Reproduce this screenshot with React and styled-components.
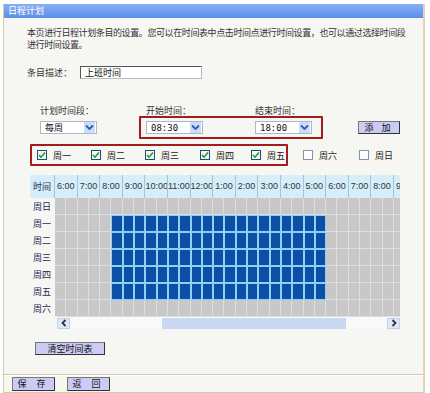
import React from "react";
import styled, { createGlobalStyle } from "styled-components";

const GlobalStyle = createGlobalStyle`
  html, body { margin: 0; padding: 0; background: #fff; }
  body {
    width: 430px;
    height: 393px;
    overflow: hidden;
    font-family: "Noto Sans CJK SC", "Liberation Sans", sans-serif;
    color: #333;
  }
`;

const Frame = styled.div`
  margin: 4px 0 0 3px;
  width: 422px;
  height: 389px;
  box-sizing: border-box;
  border-left: 1px solid #d9c9a3;
  border-right: 2px solid #e2d6b8;
  border-bottom: 1px solid #d9c9a3;
  background: #f6f6f3;
  display: flex;
  flex-direction: column;
`;

const TitleBar = styled.div`
  height: 14px;
  background: linear-gradient(#86b0f6, #5c8eea);
  color: #fff;
  font-size: 9px;
  line-height: 14px;
  padding-left: 4px;
`;

const Body = styled.div`
  flex: 1;
  padding-left: 23px;
  display: flex;
  flex-direction: column;
`;

const Intro = styled.p`
  margin: 9px 0 0;
  font-size: 9px;
  line-height: 12px;
  letter-spacing: -0.4px;
  white-space: nowrap;
  color: #333;
`;

const FieldRow = styled.div`
  margin-top: 15px;
  display: flex;
  align-items: center;
  font-size: 9px;
  height: 13px;
`;

const FieldLabel = styled.span`
  width: 53px;
`;

const TextBox = styled.div`
  width: 122px;
  height: 13px;
  box-sizing: border-box;
  border: 1px solid #555;
  border-right-color: #bbb;
  border-bottom-color: #bbb;
  background: #fff;
  font-size: 9px;
  line-height: 11px;
  padding-left: 4px;
  color: #111;
`;

const LabelRow = styled.div`
  margin: 27px 0 0 13px;
  display: flex;
  font-size: 9px;
  line-height: 10px;
  height: 10px;
`;

const ColLabel = styled.span`
  width: ${(p) => p.$w}px;
`;

const SelectRow = styled.div`
  margin: 0 0 0 13px;
  display: flex;
  align-items: center;
  height: 23px;
`;

const RedBox = styled.div`
  box-sizing: border-box;
  border: 2px solid #a31c1c;
  border-radius: 1px;
  display: flex;
  align-items: center;
  height: ${(p) => p.$h}px;
  width: ${(p) => p.$w}px;
  margin-left: ${(p) => p.$ml || 0}px;
  padding-left: 5px;
`;

const SelectBox = styled.div`
  width: 57px;
  height: 13px;
  box-sizing: border-box;
  border: 1px solid #a8b8d0;
  background: #fff;
  display: flex;
  align-items: center;
  justify-content: space-between;
  font-size: 9px;
  color: #111;
  padding-left: 4px;
  margin-right: ${(p) => p.$mr || 0}px;
  font-family: ${(p) => (p.$mono ? '"DejaVu Sans Mono", monospace' : "inherit")};
`;

const DropBtn = styled.span`
  width: 11px;
  height: 11px;
  margin-right: 1px;
  background: #cfdcf6;
  display: flex;
  align-items: center;
  justify-content: center;
`;

const Button = styled.button`
  box-sizing: border-box;
  width: ${(p) => p.$w}px;
  height: ${(p) => p.$h || 13}px;
  margin-left: ${(p) => p.$ml || 0}px;
  margin-top: ${(p) => p.$mt || 0}px;
  padding: 0;
  border: 1px solid #333;
  border-top-color: #777;
  border-left-color: #777;
  background: #cbcbf3;
  font-family: inherit;
  font-size: 9px;
  line-height: 11px;
  color: #111;
  letter-spacing: ${(p) => p.$ls || 0}px;
`;

const CheckRow = styled.div`
  margin: 5px 0 0 3px;
  display: flex;
  align-items: center;
  height: 22px;
`;

const CheckItem = styled.label`
  display: flex;
  align-items: center;
  width: ${(p) => (p.$w ? `${p.$w}px` : "auto")};
  margin-left: ${(p) => p.$ml || 0}px;
  font-size: 9px;
  color: #222;
`;

const Box = styled.span`
  width: 10px;
  height: 10px;
  box-sizing: border-box;
  border: 1px solid ${(p) => (p.$on ? "#1d4f7a" : "#8094ac")};
  background: ${(p) => (p.$on ? "#eef6ee" : "#fff")};
  margin-right: 6px;
  display: flex;
  align-items: center;
  justify-content: center;
`;

const Schedule = styled.div`
  margin: 9px 0 0 3px;
  width: 370px;
  display: flex;
`;

const LabelCol = styled.div`
  width: 25px;
  flex: none;
  display: flex;
  flex-direction: column;
`;

const CornerCell = styled.div`
  height: 23px;
  background: #d5eefa;
  font-size: 9px;
  line-height: 23px;
  padding-left: 3px;
  color: #1b2a55;
  border-right: 1px solid #a9c2d2;
  box-sizing: border-box;
`;

const DayCell = styled.div`
  height: 17px;
  font-size: 9px;
  line-height: 17px;
  padding-left: 3px;
  color: #1b2a55;
`;

const HoursPane = styled.div`
  width: 345px;
  overflow: hidden;
  display: flex;
  flex-direction: column;
`;

const HoursGrid = styled.div`
  display: grid;
  grid-template-columns: repeat(${(p) => p.$cols}, 11.3px);
  grid-template-rows: 23px repeat(7, 17px);
  width: max-content;
`;

const HourHead = styled.div`
  grid-column: span 2;
  background: #d5eefa;
  border-right: 1px solid #a9c2d2;
  box-sizing: border-box;
  font-family: "Liberation Sans", Arial, sans-serif;
  font-size: 9px;
  line-height: 23px;
  color: #333;
  text-align: center;
  white-space: nowrap;
  overflow: hidden;
`;

const Slot = styled.div`
  background: ${(p) => (p.$on ? "#0b4fa7" : "#c8c8c8")};
  box-shadow: ${(p) =>
    p.$on ? "inset 0 0 0 1px #92cff4" : "inset -1px -1px 0 #dedede"};
`;

const ScrollBar = styled.div`
  margin-left: 28px;
  width: 345px;
  height: 12px;
  display: flex;
  align-items: center;
  background: #f9f9f9;
`;

const ArrowBtn = styled.span`
  width: 13px;
  height: 11px;
  margin-left: ${(p) => p.$ml || 0}px;
  box-sizing: border-box;
  border: 1px solid #c2d0ea;
  background: #dfe8f8;
  display: flex;
  align-items: center;
  justify-content: center;
`;

const Thumb = styled.span`
  width: 184px;
  height: 11px;
  margin-left: 92px;
  background: #c8d8f2;
`;

const Footer = styled.div`
  border-top: 1px solid #d4c8aa;
  box-shadow: inset 0 1px 0 #fff;
  height: 17px;
  display: flex;
  align-items: center;
  padding-left: 8px;
`;

const Chevron = ({ dir = "down" }) => {
  const d = {
    down: "M2 3.5 L5.5 7 L9 3.5",
    left: "M6.5 2 L3.5 5 L6.5 8",
    right: "M3.5 2 L6.5 5 L3.5 8",
  }[dir];
  const size = dir === "down" ? 11 : 10;
  return (
    <svg width={size} height={size} viewBox={`0 0 ${size} ${size}`}>
      <path d={d} fill="none" stroke={dir === "down" ? "#2a5bc0" : "#334"} strokeWidth="1.8" />
    </svg>
  );
};

const Tick = () => (
  <svg width="8" height="8" viewBox="0 0 8 8">
    <path d="M1 4 L3 6.2 L7 1.5" fill="none" stroke="#1f9a1f" strokeWidth="1.5" />
  </svg>
);

const days = ["周日", "周一", "周二", "周三", "周四", "周五", "周六"];
// only the hours that fit in the visible pane (6:00 .. 9:00)
const hours = Array.from({ length: 16 }, (_, i) => (i + 6) % 24);
const cols = hours.length * 2;
const hourLabel = (h) => `${h % 12 === 0 ? 12 : h % 12}:00`;

const weekChecks = [
  { name: "周一", on: true, w: 54 },
  { name: "周二", on: true, w: 54 },
  { name: "周三", on: true, w: 55 },
  { name: "周四", on: true, w: 51 },
  { name: "周五", on: true },
];

export default function App() {
  return (
    <>
      <GlobalStyle />
      <Frame>
        <TitleBar>日程计划</TitleBar>
        <Body>
          <Intro>
            本页进行日程计划条目的设置。您可以在时间表中点击时间点进行时间设置，也可以通过选择时间段
            <br />
            进行时间设置。
          </Intro>

          <FieldRow>
            <FieldLabel>条目描述：</FieldLabel>
            <TextBox>上班时间</TextBox>
          </FieldRow>

          <LabelRow>
            <ColLabel $w={106}>计划时间段：</ColLabel>
            <ColLabel $w={109}>开始时间：</ColLabel>
            <ColLabel $w={60}>结束时间：</ColLabel>
          </LabelRow>
          <SelectRow>
            <SelectBox>
              每周
              <DropBtn><Chevron /></DropBtn>
            </SelectBox>
            <RedBox $w={184} $h={23} $ml={42}>
              <SelectBox $mr={52} $mono>
                08:30
                <DropBtn><Chevron /></DropBtn>
              </SelectBox>
              <SelectBox $mono>
                18:00
                <DropBtn><Chevron /></DropBtn>
              </SelectBox>
            </RedBox>
            <Button $w={42} $ml={35} $ls={3}>添 加</Button>
          </SelectRow>

          <CheckRow>
            <RedBox $w={258} $h={22}>
              {weekChecks.map((c) => (
                <CheckItem key={c.name} $w={c.w}>
                  <Box $on={c.on}>{c.on && <Tick />}</Box>
                  {c.name}
                </CheckItem>
              ))}
            </RedBox>
            <CheckItem $w={56} $ml={15}>
              <Box />
              周六
            </CheckItem>
            <CheckItem>
              <Box />
              周日
            </CheckItem>
          </CheckRow>

          <Schedule>
            <LabelCol>
              <CornerCell>时间</CornerCell>
              {days.map((d) => (
                <DayCell key={d}>{d}</DayCell>
              ))}
            </LabelCol>
            <HoursPane>
              <HoursGrid $cols={cols}>
                {hours.map((h, i) => (
                  <HourHead key={i}>{hourLabel(h)}</HourHead>
                ))}
                {days.map((d, r) =>
                  Array.from({ length: cols }, (_, c) => (
                    <Slot key={`${d}-${c}`} $on={r >= 1 && r <= 5 && c >= 5 && c < 24} />
                  ))
                )}
              </HoursGrid>
            </HoursPane>
          </Schedule>
          <ScrollBar>
            <ArrowBtn $ml={2}><Chevron dir="left" /></ArrowBtn>
            <Thumb />
            <ArrowBtn $ml={41}><Chevron dir="right" /></ArrowBtn>
          </ScrollBar>

          <Button $w={70} $ml={8} $mt={13}>清空时间表</Button>
        </Body>
        <Footer>
          <Button $w={43} $h={14} $ls={4}>保 存</Button>
          <Button $w={43} $h={14} $ml={12} $ls={4}>返 回</Button>
        </Footer>
      </Frame>
    </>
  );
}
